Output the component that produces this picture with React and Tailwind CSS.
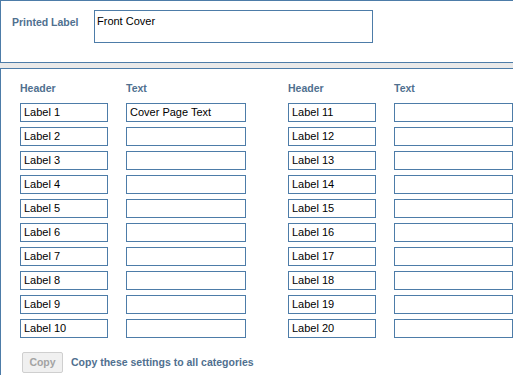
import React from "react";

const font = { fontFamily: '"Liberation Sans", Arial, sans-serif' };

function Box({ w, value }) {
  return (
    <div
      className={`${w} h-[19px] border border-[#4d7ca8] bg-white pl-[3px] text-[11px] leading-[17px] text-black whitespace-nowrap overflow-hidden`}
    >
      {value}
    </div>
  );
}

export default function App() {
  const left = Array.from({ length: 10 }, (_, i) => i + 1);
  return (
    <div className="w-[513px] h-[375px] bg-white overflow-hidden" style={font}>
      <div className="h-[63px] border-t border-l border-b border-[#4d7ca8] flex">
        <div className="pl-[11px] pt-[14px] w-[93px] text-[10.5px] font-bold text-[#50708f] leading-[14px]">
          Printed Label
        </div>
        <div className="pt-[9px]">
          <div className="w-[279px] h-[33px] border border-[#4d7ca8] pl-[2px] pt-[2px] text-[11px] leading-[17px] text-black">
            Front Cover
          </div>
        </div>
      </div>
      <div className="h-[5px] bg-[#e9e9e9]" />
      <div className="h-[312px] border-t border-l border-[#4d7ca8] pl-[19px]">
        <div className="flex pt-[12px] h-[34px] text-[10.5px] font-bold text-[#50708f] leading-[14px]">
          <div className="w-[106px]">Header</div>
          <div className="w-[162px]">Text</div>
          <div className="w-[106px]">Header</div>
          <div>Text</div>
        </div>
        <div className="flex flex-col gap-[5px]">
          {left.map((n) => (
            <div key={n} className="flex">
              <Box w="w-[88px]" value={`Label ${n}`} />
              <div className="w-[18px]" />
              <Box w="w-[120px]" value={n === 1 ? "Cover Page Text" : ""} />
              <div className="w-[42px]" />
              <Box w="w-[88px]" value={`Label ${n + 10}`} />
              <div className="w-[18px]" />
              <Box w="w-[119px]" value="" />
            </div>
          ))}
        </div>
        <div className="flex items-center mt-[14px] pl-[2px]">
          <div className="w-[41px] h-[21px] border border-[#cfcfcf] bg-[#f0f0f0] rounded-[2px] flex items-center justify-center text-[10.5px] font-bold text-[#a3a3a3]">
            Copy
          </div>
          <div className="ml-[8px] text-[10.5px] font-bold text-[#50708f]">
            Copy these settings to all categories
          </div>
        </div>
      </div>
    </div>
  );
}
